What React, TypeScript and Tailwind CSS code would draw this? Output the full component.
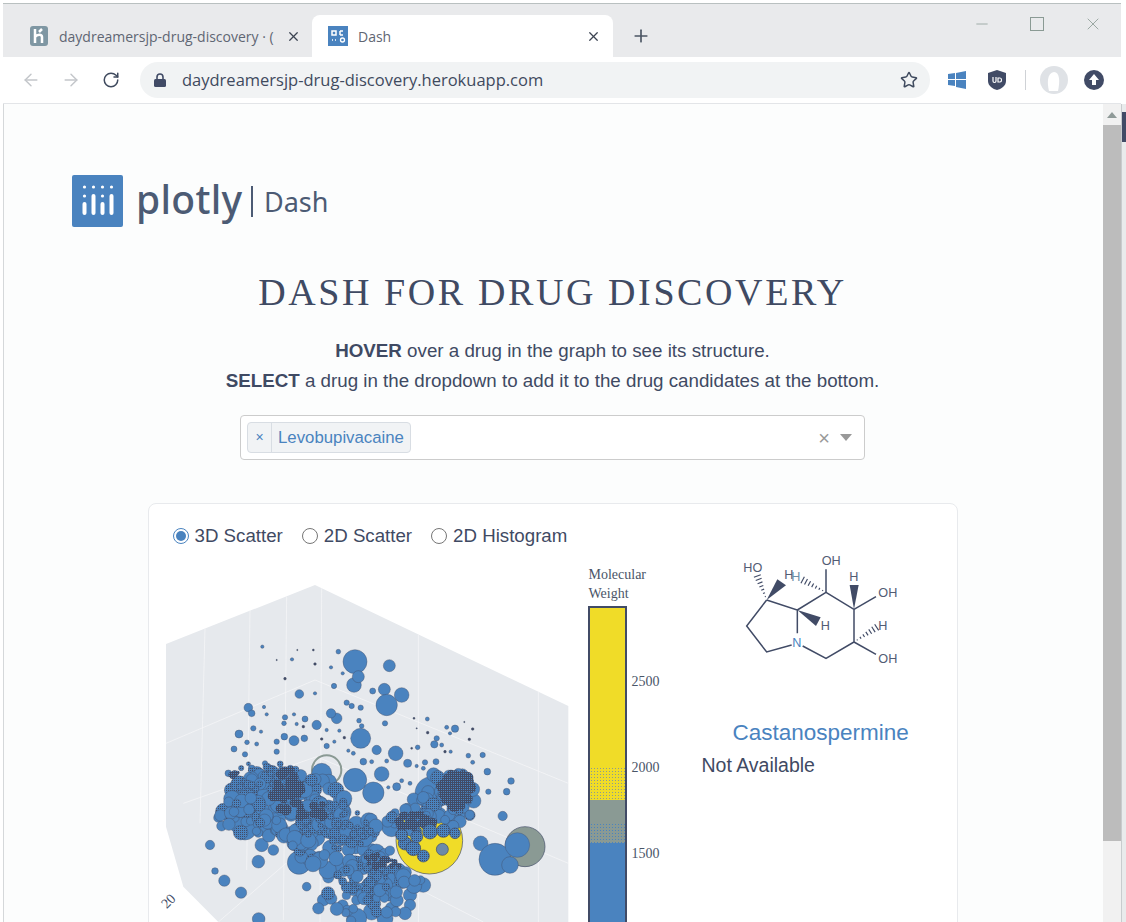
import { ArrowLeft, ArrowRight, Minus, Plus, RotateCw, Star, X } from "lucide-react";

type Dot = [number, number, number];

const BLUE = "#4a83bf";
const DARK = "#414b66";

// hand-read from the plot, in 3x coords
const bigDots: Dot[] = [
  [615, 275, 36], [718, 287, 18], [612, 345, 22], [625, 320, 18], [703, 358, 18], [755, 375, 22], [710, 405, 32],
  [448, 372, 13], [560, 445, 16], [632, 505, 30], [737, 550, 22], [500, 465, 14], [543, 430, 14], [295, 413, 13],
  [305, 430, 10], [267, 492, 12], [915, 476, 11], [853, 523, 11], [773, 580, 12], [695, 612, 22], [670, 668, 32],
  [615, 630, 35], [305, 650, 32], [265, 685, 22], [285, 775, 35], [205, 743, 14], [215, 768, 15], [180, 825, 14],
  [325, 875, 19], [370, 840, 16], [335, 825, 20], [447, 878, 35], [470, 950, 13], [535, 922, 17], [195, 903, 10],
  [223, 932, 17], [273, 968, 17], [326, 1047, 19], [520, 990, 18], [505, 1015, 17], [610, 915, 18], [600, 955, 17],
  [620, 990, 15], [665, 1025, 25], [725, 1015, 19], [780, 975, 20], [780, 1005, 17], [765, 1030, 19], [705, 1045, 24],
  [620, 1045, 30], [820, 945, 22], [700, 925, 32], [745, 905, 25], [1058, 738, 14], [1070, 665, 10], [1083, 633, 10],
  [1012, 605, 10], [1015, 665, 8], [992, 820, 22], [1035, 868, 48], [1080, 885, 25], [845, 670, 50], [725, 770, 30],
  [520, 730, 26], [410, 690, 30], [495, 800, 30], [580, 750, 18], [515, 610, 30], [875, 665, 22],
];

const smallDots: Dot[] = [
  [337, 230, 5], [442, 240, 2], [490, 240, 3], [565, 245, 7], [380, 270, 2], [426, 268, 5], [495, 282, 4], [543, 292, 5],
  [405, 326, 4], [578, 310, 5], [552, 348, 8], [668, 363, 9], [495, 370, 5], [590, 398, 8], [605, 408, 8], [632, 413, 8],
  [342, 411, 5], [350, 433, 5], [405, 442, 8], [432, 433, 5], [465, 447, 9], [402, 460, 7], [440, 462, 5], [460, 470, 4],
  [310, 475, 8], [333, 485, 5], [291, 517, 7], [320, 522, 6], [252, 537, 9], [285, 553, 8], [345, 580, 8], [380, 545, 8],
  [403, 500, 10], [432, 512, 15], [463, 505, 10], [380, 515, 8], [530, 528, 8], [553, 515, 5], [627, 452, 7], [635, 468, 7],
  [705, 460, 8], [568, 482, 5], [583, 503, 4], [515, 507, 4], [530, 480, 5], [792, 445, 3], [832, 447, 6], [800, 475, 2],
  [833, 488, 4], [860, 505, 8], [890, 472, 6], [900, 490, 5], [943, 456, 2], [968, 477, 4], [958, 508, 4], [875, 525, 6],
  [885, 545, 4], [902, 545, 5], [955, 557, 7], [998, 555, 8], [968, 577, 6], [858, 575, 9], [825, 577, 8], [800, 588, 5],
  [820, 595, 6], [785, 535, 3], [803, 532, 7], [610, 550, 6], [595, 542, 5], [640, 575, 10], [680, 540, 14], [665, 575, 6],
  [710, 573, 6], [755, 632, 6], [740, 650, 12], [715, 652, 5], [780, 640, 6], [235, 610, 10], [250, 645, 10], [305, 595, 10],
];

function seeded(seed: number) {
  let s = seed;
  return () => {
    s = (s + 0x6d2b79f5) | 0;
    let t = Math.imul(s ^ (s >>> 15), 1 | s);
    t = (t + Math.imul(t ^ (t >>> 7), 61 | t)) ^ t;
    return ((t ^ (t >>> 14)) >>> 0) / 4294967296;
  };
}

function cluster(seed: number, cx: number, cy: number, w: number, h: number, n: number, rMin: number, rMax: number): Dot[] {
  const rnd = seeded(seed);
  const out: Dot[] = [];
  for (let i = 0; i < n; i++) {
    const a = rnd() * Math.PI * 2;
    const d = Math.sqrt(rnd());
    out.push([cx + Math.cos(a) * d * w, cy + Math.sin(a) * d * h, rMin + rnd() * (rMax - rMin)]);
  }
  return out;
}

// keep the yellow crescent free
const offYellow = ([x, y]: Dot) => Math.hypot(x - 838, y - 812) > 118 || y < 785;

const blueDots: Dot[] = [
  ...cluster(3, 400, 700, 185, 100, 150, 12, 26),
  ...cluster(4, 560, 810, 135, 95, 90, 12, 26),
  ...cluster(5, 700, 910, 130, 70, 65, 12, 24),
  ...cluster(6, 880, 690, 95, 95, 60, 10, 22),
  ...cluster(7, 640, 1000, 130, 55, 25, 12, 20),
  ...cluster(20, 780, 760, 70, 50, 30, 10, 20),
  ...cluster(26, 280, 740, 80, 60, 20, 12, 22),
].filter(offYellow);

const heavyDots: Dot[] = [
  ...cluster(8, 410, 660, 50, 60, 30, 10, 18),
  ...cluster(9, 920, 660, 48, 56, 60, 10, 19),
  ...cluster(10, 800, 755, 55, 30, 25, 8, 16),
  ...cluster(11, 490, 725, 50, 30, 18, 8, 14),
  ...cluster(12, 700, 875, 70, 26, 25, 6, 12),
  ...cluster(14, 255, 612, 18, 8, 6, 6, 11),
].filter(offYellow);

const speckDots: Dot[] = [
  ...cluster(21, 350, 620, 110, 50, 30, 6, 13),
  ...cluster(22, 560, 760, 120, 80, 35, 6, 13),
  ...cluster(23, 640, 920, 80, 60, 20, 6, 12),
].filter(offYellow);

function ScatterPlot() {
  return (
    <svg viewBox="0 0 1290 1056" className="w-[430px] h-[352px] shrink-0">
      <defs>
        <pattern id="dither" width="6" height="6" patternUnits="userSpaceOnUse">
          <rect width="6" height="6" fill={BLUE} />
          <rect width="3" height="3" fill={DARK} />
        </pattern>
        <pattern id="heavy" width="6" height="6" patternUnits="userSpaceOnUse">
          <rect width="6" height="6" fill={DARK} />
          <rect x="3" y="3" width="3" height="3" fill={BLUE} />
        </pattern>
      </defs>
      <polygon points="48,222 495,45 1255,408 1255,1056 205,1056 100,950 48,770" fill="#e6e9ed" />
      <g stroke="#f7f8f9" strokeWidth="2" fill="none">
        <path d="M165,175 L150,760 M300,120 L290,900 M410,80 L400,1050 M515,55 L510,1056 M805,195 L805,1056 M1165,365 L1165,1056" />
        <path d="M48,520 L495,330 L1255,640 M100,700 L500,560 L1255,880 M205,1056 L500,800 L1000,1056" />
      </g>
      <circle cx="1125" cy="830" r="60" fill="#8a9a94" stroke={DARK} strokeWidth="2" />
      <circle cx="838" cy="812" r="100" fill="#f0dc28" stroke={DARK} strokeWidth="2" />
      <circle cx="530" cy="600" r="44" fill="none" stroke="#8a9a94" strokeWidth="6" />
      <g fill={BLUE} stroke={DARK} strokeOpacity="0.6" strokeWidth="2">
        {smallDots.map(([x, y, r], i) => (
          <circle key={i} cx={x} cy={y} r={r} fill={r < 5 ? DARK : BLUE} />
        ))}
        {bigDots.map(([x, y, r], i) => (
          <circle key={i} cx={x} cy={y} r={r} />
        ))}
        {blueDots.map(([x, y, r], i) => (
          <circle key={i} cx={x} cy={y} r={r} fill={i % 4 === 0 ? "url(#dither)" : BLUE} />
        ))}
        {speckDots.map(([x, y, r], i) => (
          <circle key={i} cx={x} cy={y} r={r} fill="url(#dither)" />
        ))}
      </g>
      <g fill="url(#heavy)">
        {heavyDots.map(([x, y, r], i) => (
          <circle key={i} cx={x} cy={y} r={r} />
        ))}
      </g>
      <g fill="url(#dither)" stroke={DARK} strokeWidth="2">
        <circle cx="765" cy="820" r="20" />
        <circle cx="790" cy="835" r="22" />
        <circle cx="820" cy="858" r="18" />
        <circle cx="800" cy="800" r="18" />
        <circle cx="840" cy="785" r="22" />
        <circle cx="880" cy="782" r="20" />
        <circle cx="915" cy="790" r="16" />
        <circle cx="755" cy="795" r="18" />
      </g>
      <circle cx="877" cy="838" r="18" fill="#6d8aa8" stroke={DARK} strokeWidth="2" />
      <circle cx="1102" cy="825" r="37" fill={BLUE} stroke={DARK} strokeOpacity="0.5" strokeWidth="2" />
      <text x="50" y="1018" transform="rotate(-45 50 1018)" fontFamily="Liberation Serif" fontSize="42" fill="#414b66">
        20
      </text>
    </svg>
  );
}

function ColorBar() {
  return (
    <div className="ml-2 w-[100px] shrink-0 -mt-[5px] font-['Liberation_Serif',serif] text-[14px] text-[#4a5568]">
      <div className="leading-[19px] pl-px">
        Molecular
        <br />
        Weight
      </div>
      <div className="mt-[3px] flex">
        <div className="w-[39px] h-[360px] border-2 border-[#414b66] border-b-0 flex flex-col shrink-0">
          <div className="h-[159px] bg-[#f0dc28]" />
          <div className="h-[33px] bg-[#f0dc28] bg-[radial-gradient(#8a9a94_1px,transparent_1px)] bg-[length:3px_3px]" />
          <div className="h-[23px] bg-[#8a9a94]" />
          <div className="h-[20px] bg-[#8a9a94] bg-[radial-gradient(#4a83bf_1px,transparent_1px)] bg-[length:3px_3px]" />
          <div className="flex-1 bg-[#4a83bf]" />
        </div>
        <div className="pl-[5px] flex flex-col leading-[20px]">
          <div className="mt-[66px]">2500</div>
          <div className="mt-[66px]">2000</div>
          <div className="mt-[66px]">1500</div>
        </div>
      </div>
    </div>
  );
}

function Molecule() {
  const hash = (x1: number, y1: number, x2: number, y2: number) => {
    const lines = [];
    const dx = x2 - x1;
    const dy = y2 - y1;
    const len = Math.hypot(dx, dy);
    for (let i = 1; i <= 7; i++) {
      const t = i / 7;
      const half = t * 11;
      const mx = x1 + dx * t;
      const my = y1 + dy * t;
      lines.push(
        <line key={i} x1={mx - (dy / len) * half} y1={my + (dx / len) * half} x2={mx + (dy / len) * half} y2={my - (dx / len) * half} />
      );
    }
    return lines;
  };
  return (
    <svg viewBox="0 0 660 420" className="w-[220px] h-[140px] block">
      <g stroke="#414b66" strokeWidth="4.5" fill="none">
        <polyline points="200,180 140,258 200,336 275,315" />
        <polyline points="292,280 292,210 200,180" />
        <polyline points="292,210 378,157 462,208 462,306 378,355 308,318" />
        <line x1="378" y1="157" x2="378" y2="88" />
        <line x1="462" y1="208" x2="528" y2="170" />
        <line x1="462" y1="306" x2="528" y2="343" />
      </g>
      <g stroke="#414b66" strokeWidth="3.5">
        {hash(200, 180, 172, 108)}
        {hash(378, 157, 308, 120)}
        {hash(462, 306, 530, 262)}
      </g>
      <g fill="#414b66">
        <polygon points="200,180 232,118 258,136" />
        <polygon points="292,210 362,232 348,258" />
        <polygon points="462,208 449,135 476,135" />
      </g>
      <g fontFamily="Liberation Sans" fontSize="38" fill="#525c74">
        <text x="130" y="95">HO</text>
        <text x="253" y="118">H</text>
        <text x="274" y="122" fill="#6f8fa8">H</text>
        <text x="365" y="75">OH</text>
        <text x="448" y="122">H</text>
        <text x="535" y="170">OH</text>
        <text x="535" y="270">H</text>
        <text x="535" y="368">OH</text>
        <text x="362" y="270">H</text>
        <text x="277" y="320" fill="#4a83bf">N</text>
      </g>
    </svg>
  );
}

function PlotlyLogo() {
  const bars: [number, number][] = [[12.5, 24], [21.5, 16], [30.5, 24], [39.5, 16]];
  return (
    <div className="flex items-center">
      <svg viewBox="0 0 51 52" className="w-[51px] h-[52px] shrink-0">
        <rect width="51" height="52" rx="2" fill={BLUE} />
        {bars.map(([x, y]) => (
          <g key={x} fill="white">
            <circle cx={x} cy="12" r="1.6" />
            <rect x={x - 2} y={y + 3} width="4" height={40 - y - 3} rx="2" />
          </g>
        ))}
        <circle cx="12.5" cy="21" r="1.6" fill="white" />
        <circle cx="30.5" cy="21" r="1.6" fill="white" />
      </svg>
      <span className="ml-[13px] w-[106px] font-['Noto_Sans',sans-serif] font-medium text-[39px] leading-none tracking-[0.3px] text-[#4c5b74] -mt-[6px]">plotly</span>
      <span className="ml-[9px] w-[2px] h-[31px] bg-[#4c5b74]" />
      <span className="ml-[11px] font-['Noto_Sans',sans-serif] text-[27px] leading-none text-[#4c5b74]">Dash</span>
    </div>
  );
}

function Radio({ label, checked }: { label: string; checked?: boolean }) {
  return (
    <label className="flex items-center">
      <span className={`w-4 h-4 rounded-full border flex items-center justify-center ${checked ? "border-[#4a83bf]" : "border-[#767676]"}`}>
        {checked && <span className="w-[10px] h-[10px] rounded-full bg-[#4a83bf]" />}
      </span>
      <span className="ml-[6px]">{label}</span>
    </label>
  );
}

function BrowserChrome() {
  return (
    <div className="shrink-0 mr-[5px] font-['Open_Sans',sans-serif]">
      <div className="h-[54px] bg-[#e9eaec] flex items-end pl-[9px] border-t border-[#b9c0c0]">
        <div className="w-[300px] h-[42px] flex items-center pl-[18px] pr-[11px] text-[14px] text-[#5f6673]">
          <svg viewBox="0 0 18 20" className="w-[18px] h-[20px] shrink-0">
            <rect width="18" height="20" rx="3" fill="#7f97a3" />
            <path d="M5 3v14M5 11c2-3 7-3 7 0v6M12 3l-3 3" stroke="white" strokeWidth="2.5" fill="none" />
          </svg>
          <span className="ml-[11px] flex-1 whitespace-nowrap overflow-hidden">daydreamersjp-drug-discovery · (</span>
          <X size={15} strokeWidth={2} className="ml-2 shrink-0 text-[#3c4452]" />
        </div>
        <div className="w-[301px] h-[42px] bg-white rounded-t-[8px] flex items-center pl-[16px] pr-[12px] text-[14px] text-[#5f6673]">
          <svg viewBox="0 0 20 20" className="w-5 h-5 shrink-0">
            <rect width="20" height="20" fill={BLUE} />
            <path d="M4 5h4v4H4zM12 5h3M12 9h3M12 5v4M4 14h1M7 14h1" stroke="white" strokeWidth="1.5" fill="none" />
            <circle cx="14.5" cy="14" r="2" stroke="white" strokeWidth="1.3" fill="none" />
          </svg>
          <span className="ml-[10px] flex-1">Dash</span>
          <X size={15} strokeWidth={2} className="text-[#3c4452]" />
        </div>
        <Plus size={20} strokeWidth={2} className="ml-[18px] mb-[11px] text-[#4b5563]" />
        <div className="flex-1 self-start flex justify-end items-center pr-[18px] pt-[10px] gap-[39px] text-[#8a9a94]">
          <Minus size={18} strokeWidth={1} />
          <span className="w-[14px] h-[14px] border border-[#8a9a94]" />
          <X size={20} strokeWidth={1} />
        </div>
      </div>
      <div className="h-[47px] bg-white flex items-center pl-[18px] border-b border-[#e3e5e8]">
        <ArrowLeft size={20} strokeWidth={1.7} className="text-[#c3c6ca]" />
        <ArrowRight size={20} strokeWidth={1.7} className="ml-5 text-[#c3c6ca]" />
        <RotateCw size={18} strokeWidth={2} className="ml-[21px] text-[#3f4a5e]" />
        <div className="ml-[20px] w-[790px] h-[36px] rounded-full bg-[#f1f3f4] flex items-center pl-[14px] pr-[12px]">
          <svg viewBox="0 0 12 14" className="w-3 h-[14px]">
            <path d="M3 6V4a3 3 0 016 0v2" stroke="#414b66" strokeWidth="1.6" fill="none" />
            <rect y="6" width="12" height="8" rx="1.5" fill="#414b66" />
          </svg>
          <span className="ml-[16px] flex-1 text-[16.5px] text-[#3f4a5e]">daydreamersjp-drug-discovery.herokuapp.com</span>
          <Star size={18} strokeWidth={2} className="text-[#3f4a5e]" />
        </div>
        <svg viewBox="0 0 18 20" className="ml-[18px] w-[18px] h-5">
          <path d="M0 4l7-1v6H0zM8 3l10-2v8H8zM0 10h7v6l-7-1zM8 10h10v9L8 17z" fill={BLUE} />
        </svg>
        <svg viewBox="0 0 18 20" className="ml-[22px] w-[18px] h-5">
          <path d="M9 0l9 3v8c0 5-5 8-9 9-4-1-9-4-9-9V3z" fill="#414b66" />
          <path d="M5 7v4c0 2 3 2 3 0V7M10 8h2c2 0 2 4 0 4h-2z" stroke="white" strokeWidth="1.2" fill="none" />
        </svg>
        <span className="ml-[19px] w-px h-[20px] bg-[#cfd2d6]" />
        <svg viewBox="0 0 28 28" className="ml-[14px] w-7 h-7">
          <circle cx="14" cy="14" r="14" fill="#dfe2e6" />
          <path d="M9 25c-2-8-2-18 5-19 6 0 6 10 4 19z" fill="white" />
        </svg>
        <svg viewBox="0 0 20 20" className="ml-[16px] w-5 h-5">
          <circle cx="10" cy="10" r="10" fill="#414b66" />
          <path d="M10 4l5 6h-3v5H8v-5H5z" fill="white" />
        </svg>
      </div>
    </div>
  );
}

function Scrollbar() {
  return (
    <div className="w-[18px] shrink-0 bg-[#f1f1f1] flex flex-col">
      <div className="h-[21px] flex items-center justify-center">
        <span className="w-0 h-0 border-x-[5px] border-x-transparent border-b-[6px] border-b-[#8f9a98]" />
      </div>
      <div className="h-[716px] bg-[#bcbcbc]" />
    </div>
  );
}

export default function App() {
  return (
    <div className="w-[1126px] h-[922px] overflow-hidden bg-white flex flex-col pt-[3px] pl-[3px]">
      <BrowserChrome />
      <div className="flex-1 min-h-0 flex border-l border-[#d5d8da]">
        <div className="flex-1 min-w-0 overflow-hidden pr-[2px] bg-[#fcfdfd] font-['Liberation_Sans',sans-serif] text-[#3f4a63]">
          <div className="pt-[71px] pl-[68px]">
            <PlotlyLogo />
          </div>
          <h1 className="mt-[41px] text-center font-['Liberation_Serif',serif] text-[38px] leading-[48px] tracking-[2.6px] text-[#3f4a63]">
            DASH FOR DRUG DISCOVERY
          </h1>
          <div className="mt-[20px] text-center text-[18.75px] leading-[30px]">
            <div>
              <b>HOVER</b> over a drug in the graph to see its structure.
            </div>
            <div>
              <b>SELECT</b> a drug in the dropdown to add it to the drug candidates at the bottom.
            </div>
          </div>
          <div className="mt-[19px] mx-auto w-[625px] h-[45px] rounded border border-[#cccccc] bg-white flex items-center pl-[6px] pr-[12px]">
            <div className="h-[31px] flex items-stretch border border-[#d8dde3] rounded-sm bg-[#f1f3f5] text-[#4a83bf]">
              <span className="w-6 flex items-center justify-center border-r border-[#d8dde3] text-[14px]">×</span>
              <span className="pl-[6px] pr-[6px] flex items-center text-[16.8px]">Levobupivacaine</span>
            </div>
            <div className="flex-1" />
            <span className="text-[#999999] text-[20px] leading-none">×</span>
            <span className="ml-[10px] w-0 h-0 border-x-[6px] border-x-transparent border-t-[7px] border-t-[#999999]" />
          </div>
          <div className="mt-[43px] mx-auto w-[810px] h-[500px] rounded-lg border border-[#e8eaed] bg-white flex">
            <div className="w-[551px] shrink-0">
              <div className="mt-[21px] ml-6 flex gap-[19px] text-[18.7px] leading-[22px]">
                <Radio label="3D Scatter" checked />
                <Radio label="2D Scatter" />
                <Radio label="2D Histogram" />
              </div>
              <div className="mt-[23px] ml-px flex">
                <ScatterPlot />
                <ColorBar />
              </div>
            </div>
            <div className="flex-1 pt-9">
              <Molecule />
              <div className="mt-[39px] ml-[33px] text-[22.5px] leading-7 text-[#4a83bf]">Castanospermine</div>
              <div className="mt-[7px] ml-[2px] text-[19.5px] leading-[22px]">Not Available</div>
            </div>
          </div>
        </div>
        <Scrollbar />
        <div className="w-[5px] shrink-0 bg-[#e9ebec] border-l border-[#c8ccce] flex flex-col">
          <div className="mt-[8px] h-[30px] bg-[#414b66]" />
        </div>
      </div>
    </div>
  );
}
